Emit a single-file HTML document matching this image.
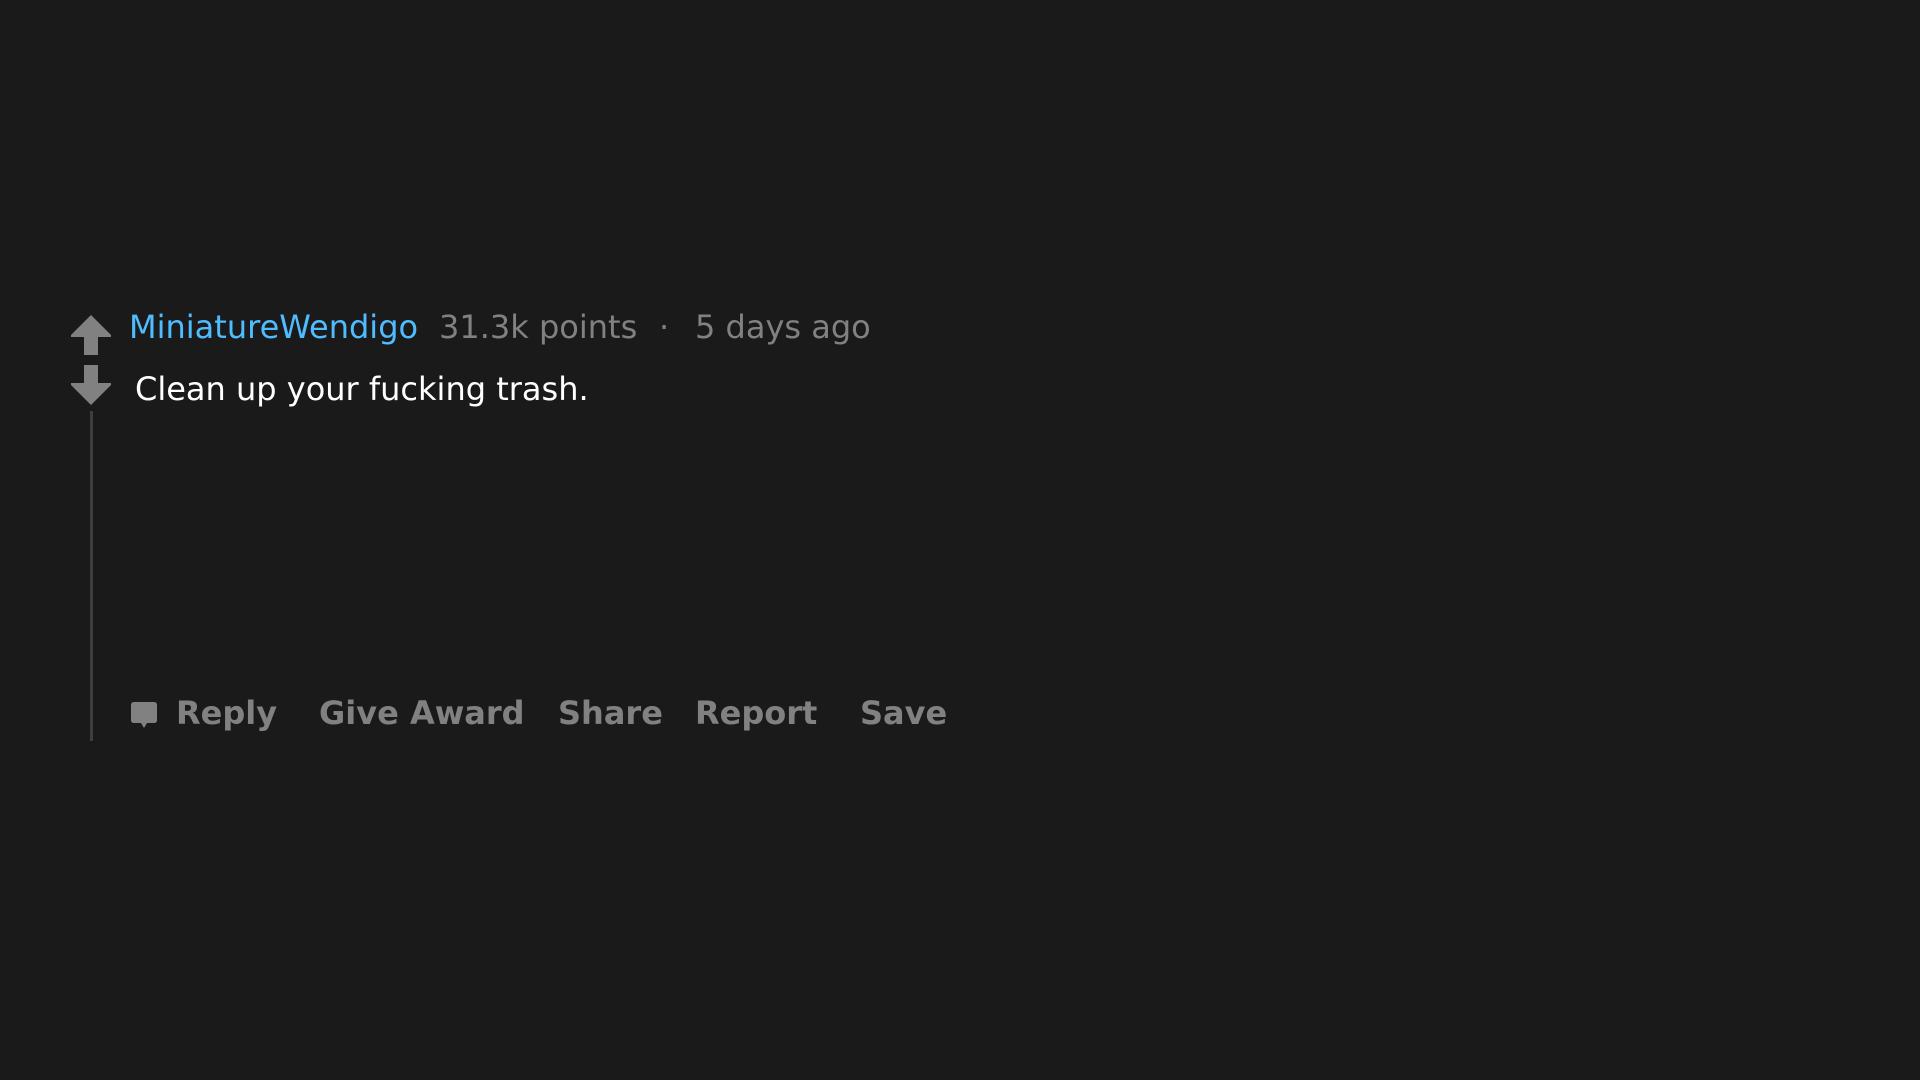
<!DOCTYPE html>
<html><head><style>
body{margin:0;width:1920px;height:1080px;background:#1a1a1a;font-family:"DejaVu Sans","Liberation Sans",sans-serif;position:relative;overflow:hidden}
.a{position:absolute;white-space:nowrap;line-height:1}
.g{color:#818181}
.b{font-weight:bold;color:#818181;font-size:32px;top:697px}
</style></head><body>
<svg class="a" style="left:71px;top:315px" width="40" height="40" viewBox="0 0 40 40"><path d="M20 0 L40 20 L40 22 L27 22 L27 40 L13 40 L13 22 L0 22 L0 20 Z" fill="#818181"/></svg>
<svg class="a" style="left:71px;top:365px" width="40" height="40" viewBox="0 0 40 40"><path d="M13 0 L27 0 L27 18 L40 18 L40 20 L20 40 L0 20 L0 18 L13 18 Z" fill="#818181"/></svg>
<div class="a" style="left:90px;top:411px;width:3px;height:330px;background:#3e3e3e"></div>
<div class="a" style="left:129px;top:311px;font-size:32px;color:#4fbcff">MiniatureWendigo</div>
<div class="a g" style="left:439px;top:311px;font-size:32px">31.3k points</div>
<div class="a g" style="left:659px;top:311px;font-size:32px">·</div>
<div class="a g" style="left:695px;top:311px;font-size:32px">5 days ago</div>
<div class="a" style="left:135px;top:373px;font-size:32px;color:#fff">Clean up your fucking trash.</div>
<svg class="a" style="left:131px;top:702px" width="26" height="28" viewBox="0 0 26 28"><path d="M3 0 H23 Q26 0 26 3 V18 Q26 21 23 21 H16 L13 26 L10 21 H3 Q0 21 0 18 V3 Q0 0 3 0 Z" fill="#818181"/></svg>
<div class="a b" style="left:176px">Reply</div>
<div class="a b" style="left:319px">Give Award</div>
<div class="a b" style="left:558px">Share</div>
<div class="a b" style="left:695px">Report</div>
<div class="a b" style="left:860px">Save</div>
</body></html>
